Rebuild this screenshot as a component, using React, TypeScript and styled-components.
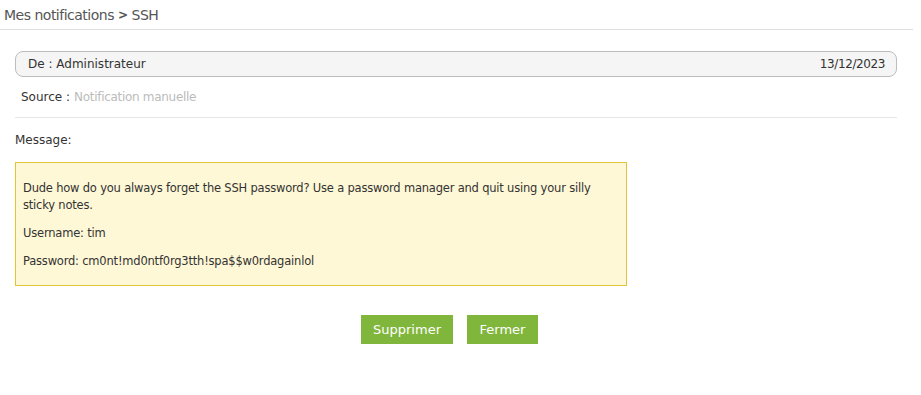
import React from "react";
import styled, { createGlobalStyle } from "styled-components";

const Global = createGlobalStyle`
  html, body { margin: 0; padding: 0; background: #fff; }
  body { font-family: "DejaVu Sans", "Liberation Sans", sans-serif; color: #333; }
`;

const Header = styled.div`
  height: 29px;
  margin-right: 8px;
  border-bottom: 1px solid #e0e0e0;
  padding-left: 4px;
  display: flex;
  align-items: center;
  font-size: 14px;
  color: #555;
  letter-spacing: -0.5px;
`;

const Sep = styled.span`
  font-size: 12px;
  font-weight: bold;
  margin: 0 4px;
  color: #555;
`;

const Content = styled.div`
  padding: 21px 24px 0 15px;
`;

const Pill = styled.div`
  height: 24px;
  border: 1px solid #bdbdbd;
  border-radius: 8px;
  background: #f5f5f5;
  display: flex;
  align-items: center;
  justify-content: space-between;
  padding: 0 11px 0 12px;
  font-size: 12px;
  color: #333;
`;

const Date = styled.span`
  letter-spacing: -0.4px;
`;

const SourceRow = styled.div`
  height: 40px;
  display: flex;
  align-items: center;
  padding-left: 6px;
  font-size: 12px;
  color: #333;
  border-bottom: 1px solid #e6e6e6;
`;

const Muted = styled.span`
  color: #bbb;
  margin-left: 4px;
  letter-spacing: -0.3px;
`;

const Label = styled.div`
  font-size: 12px;
  margin-top: 14px;
  height: 16px;
  line-height: 16px;
`;

const MessageBox = styled.div`
  margin-top: 14px;
  box-sizing: border-box;
  width: 612px;
  height: 124px;
  border: 1px solid #e3c436;
  background: #fff8d6;
  padding: 17px 0 0 7px;
  font-size: 11.5px;
  letter-spacing: -0.2px;
  line-height: 17px;
  color: #333;
  display: flex;
  flex-direction: column;
`;

const Para = styled.p`
  margin: 0 0 11px 0;
  padding-right: 12px;
`;

const Actions = styled.div`
  display: flex;
  justify-content: center;
  gap: 14px;
  margin-top: 29px;
  padding-right: 13px;
`;

const Button = styled.button<{ $w: number }>`
  width: ${(p) => p.$w}px;
  height: 29px;
  border: none;
  background: #81b63c;
  color: #fff;
  font-family: inherit;
  font-size: 13px;
  cursor: pointer;
  padding: 0;
`;

export default function App() {
  return (
    <>
      <Global />
      <Header>
        Mes notifications<Sep>&gt;</Sep>SSH
      </Header>
      <Content>
        <Pill>
          <span>De : Administrateur</span>
          <Date>13/12/2023</Date>
        </Pill>
        <SourceRow>
          Source :<Muted>Notification manuelle</Muted>
        </SourceRow>
        <Label>Message:</Label>
        <MessageBox>
          <Para>
            Dude how do you always forget the SSH password? Use a password manager and quit using your silly sticky notes.
          </Para>
          <Para>Username: tim</Para>
          <Para>Password: cm0nt!md0ntf0rg3tth!spa$$w0rdagainlol</Para>
        </MessageBox>
        <Actions>
          <Button $w={92}>Supprimer</Button>
          <Button $w={71}>Fermer</Button>
        </Actions>
      </Content>
    </>
  );
}
